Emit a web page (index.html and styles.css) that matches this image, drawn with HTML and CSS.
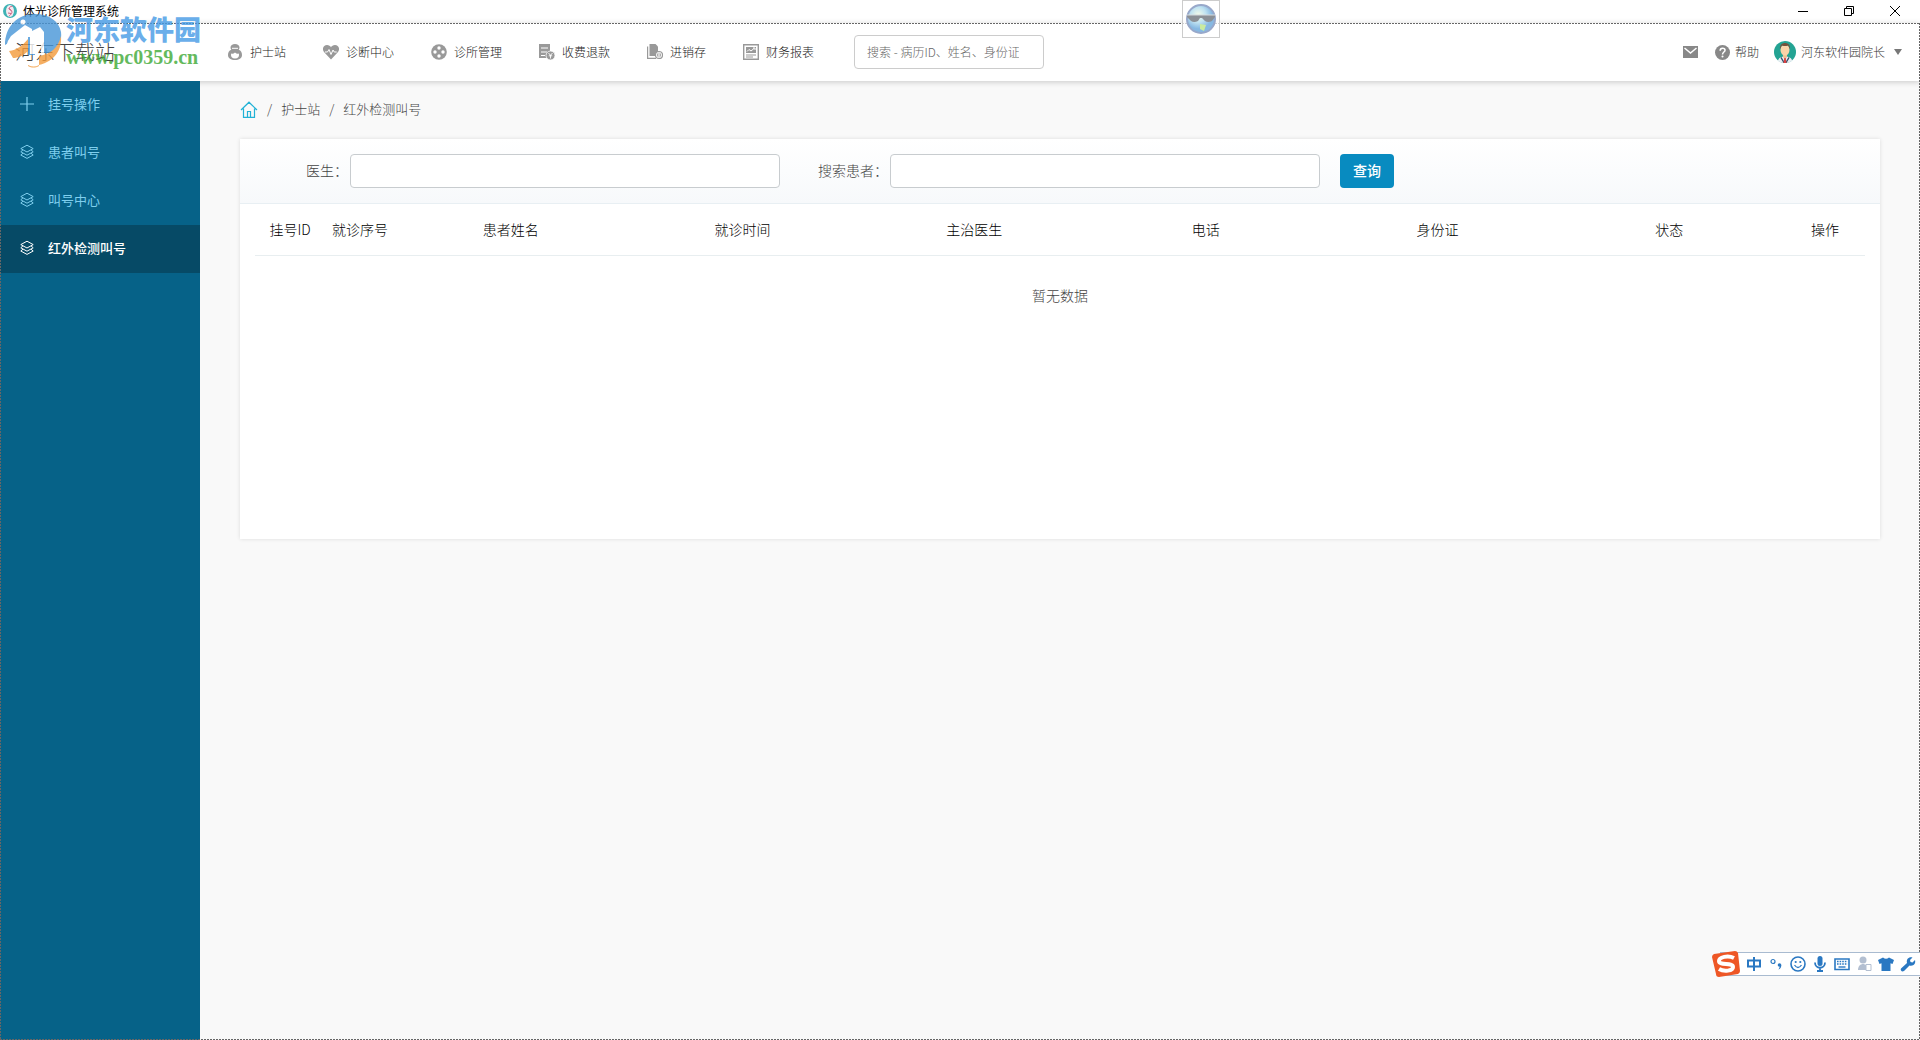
FILE: index.html
```html
<!DOCTYPE html>
<html lang="zh-CN">
<head>
<meta charset="utf-8">
<title>体光诊所管理系统</title>
<link rel="stylesheet" href="styles.css">
</head>
<body>
<svg class="defs" aria-hidden="true">
  <symbol id="layers" viewBox="0 0 16 16">
    <path d="M8 1.200 14.200 4.600 8 8 1.800 4.600zM4 5.800 1.800 7.800 8 11.200 14.200 7.800 12 5.800M4 9.200 1.800 11 8 14.400 14.200 11 12 9.200" fill="none" stroke="currentColor" stroke-linejoin="round"/>
  </symbol>
</svg>

<div class="titlebar">
  <svg class="app-icon" viewBox="0 0 16 16" aria-hidden="true">
    <circle cx="8" cy="8" r="7" fill="#3fb3b5"/>
    <ellipse cx="8" cy="8" rx="4" ry="6" fill="#f4e9ef"/>
    <path d="M10.500 3.500C7 3 6.500 6 9 7.500S8.500 12 7 13M6.500 5.500l3 2M6 10l3 .5" fill="none" stroke="#c2416b" stroke-width=".8"/>
  </svg>
  <span class="app-title">体光诊所管理系统</span>
  <div class="window-controls">
    <button type="button" aria-label="最小化"><svg viewBox="0 0 12 12"><path d="M1 6.500h10"/></svg></button>
    <button type="button" aria-label="还原"><svg viewBox="0 0 12 12"><path d="M1.500 3.500h7v7h-7zM3.500 3V1.500h7v7H9"/></svg></button>
    <button type="button" aria-label="关闭"><svg viewBox="0 0 12 12"><path d="M1 1l10 10M11 1 1 11"/></svg></button>
  </div>
</div>

<div class="client">
  <header class="header">
    <div class="brand">河东下载站</div>
    <nav class="main-nav">
      <a href="#"><svg viewBox="0 0 16 16"><path d="M8 0C5.500 0 3.500 1.500 3.500 3.500c0 1 .3 1.700.8 2.200C2 6.500 1 8.500 1 11c0 3.500 3 5 7 5s7-1.500 7-5c0-2.500-1-4.500-3.300-5.300.5-.5.8-1.200.8-2.200C12.500 1.500 10.500 0 8 0z" fill="#999"/><path d="M5 4.300h6" stroke="#fff"/><path d="M4 9.500q2 1 4-1 2 2 4 1 .5 5-4 5t-4-5z" fill="#fff"/></svg>护士站</a>
      <a href="#"><svg viewBox="0 0 16 16"><path d="M8 15.500 1.200 8.300C-1.500 5 .5 1 4 1c2 0 3.200 1 4 2.200C8.800 2 10 1 12 1c3.500 0 5.500 4 2.800 7.300z" fill="#999"/><path d="M2 8h2.500l1.500-2.500 2 5 2-4.500 1.200 2h2.500" fill="none" stroke="#fff"/></svg>诊断中心</a>
      <a href="#"><svg viewBox="0 0 16 16"><circle cx="8" cy="8" r="7.800" fill="#999"/><g fill="#fff"><circle cx="8" cy="4" r="1.700"/><circle cx="8" cy="12" r="1.700"/><circle cx="4" cy="8" r="1.700"/><circle cx="12" cy="8" r="1.700"/></g></svg>诊所管理</a>
      <a href="#"><svg viewBox="0 0 16 16"><path d="M0 0h11v14H0z" fill="#999"/><path d="M2 4h7M2 8h6M2 11.500h4" stroke="#fff" stroke-width="1.200"/><circle cx="11.500" cy="11.500" r="4.500" fill="#999" stroke="#fff" stroke-width=".8"/><path d="M9.500 9l2 2.300 2-2.300M11.500 11v3.500M9.800 11.800h3.400" fill="none" stroke="#fff" stroke-width=".9"/></svg>收费退款</a>
      <a href="#"><svg viewBox="0 0 16 16"><path d="M2.500 0h6l2.500 2.500V12H2.500z" fill="#999"/><path d="M.6 2.500v11.900H9" fill="none" stroke="#999" stroke-width="1.200"/><circle cx="12" cy="11" r="3.500" fill="#fff" stroke="#999" stroke-width="1.200"/><path d="M12 8.500v5M10.500 9.500v3M13.500 9.500v3" stroke="#999" stroke-width=".8"/></svg>进销存</a>
      <a href="#"><svg viewBox="0 0 16 16"><path d="M.7.700h14.600v14.600H.7z" fill="none" stroke="#999" stroke-width="1.400"/><path d="M3 3h10v6H3z" fill="#999"/><path d="M4 7.500l2-2 2 1.500 3-2.500M10 4h2v2" fill="none" stroke="#fff"/><path d="M3 11h10M3 13h7" stroke="#999"/></svg>财务报表</a>
    </nav>
    <input class="global-search" type="search" aria-label="搜索" placeholder="搜索 - 病历ID、姓名、身份证">
    <div class="user-tools">
      <a class="mail" href="#" aria-label="消息"><svg viewBox="0 0 15 12"><path d="M0 0h15v12H0z" fill="#888"/><path d="M1.500 2 7.500 7l6-5" fill="none" stroke="#fff" stroke-width="1.500"/></svg></a>
      <a class="help" href="#"><svg viewBox="0 0 16 16"><circle cx="8" cy="8" r="8" fill="#888"/><path d="M5.500 6c0-3.500 5.200-3.200 5.200-.3C10.700 7.500 8 7.600 8 10" fill="none" stroke="#fff" stroke-width="1.600"/><circle cx="8" cy="12.300" r="1.100" fill="#fff"/></svg>帮助</a>
      <button class="account" type="button">
        <svg class="avatar" viewBox="0 0 22 22"><circle cx="11" cy="11" r="11" fill="#23a393"/><path d="M4 20c0-3 3-4.500 7-4.500s7 1.500 7 4.500c-4 2.700-10 2.700-14 0z" fill="#e9eef3"/><path d="M9 12h4v4l-2 3-2-3z" fill="#eebf93"/><path d="M7.500 16 11 22l3.500-6 1 1-3 5h-3l-3-5z" fill="#35506b"/><path d="M10.300 17h1.400l.8 5h-3z" fill="#d94343"/><ellipse cx="11" cy="9" rx="4.500" ry="5.500" fill="#fbd3a8"/><path d="M6 8C5 0 17 0 16 8c-1-1-1-3-2-3.500-2 .7-4 .7-6 0C7 5 7 7 6 8z" fill="#76513a"/></svg>
        <span>河东软件园院长</span>
        <svg class="caret" viewBox="0 0 8 6"><path d="M0 0h8L4 6z" fill="#777"/></svg>
      </button>
    </div>
  </header>

  <div class="body">
    <aside class="sidebar">
      <a href="#"><svg viewBox="0 0 16 16"><path d="M8 1v14M1 8h14" stroke="currentColor" fill="none" stroke-width="1.200"/></svg>挂号操作</a>
      <a href="#"><svg><use href="#layers"/></svg>患者叫号</a>
      <a href="#"><svg><use href="#layers"/></svg>叫号中心</a>
      <a class="active" href="#"><svg><use href="#layers"/></svg>红外检测叫号</a>
    </aside>

    <main class="content">
      <nav class="breadcrumb" aria-label="位置">
        <a href="#" aria-label="首页"><svg viewBox="0 0 18 17"><path d="M1 9 9 1.200 17 9M3.500 7.500v8.800h11V7.500M7.500 16v-5.500h3V16" fill="none" stroke="#22b2d6" stroke-width="1.200"/></svg></a>
        <span>/</span><a href="#">护士站</a><span>/</span><span>红外检测叫号</span>
      </nav>
      <section class="card">
        <form class="filters">
          <label for="doctor">医生<span class="colon">：</span></label>
          <input id="doctor" type="text">
          <label for="patient">搜索患者<span class="colon">：</span></label>
          <input id="patient" type="text">
          <button type="button">查询</button>
        </form>
        <div class="table-wrap">
          <table>
            <colgroup><col class="col-s"><col class="col-s"><col><col><col><col><col><col><col class="col-m"></colgroup>
            <thead><tr><th>挂号ID</th><th>就诊序号</th><th>患者姓名</th><th>就诊时间</th><th>主治医生</th><th>电话</th><th>身份证</th><th>状态</th><th>操作</th></tr></thead>
            <tbody><tr><td colspan="9">暂无数据</td></tr></tbody>
          </table>
        </div>
      </section>
    </main>
  </div>
</div>

<div class="watermark">
  <svg viewBox="0 0 62 56" aria-hidden="true">
    <path d="M1 32C1 14 13 1 31 1c14 0 24 7 26 18 1 8-2 15-9 21h-7l-4 1V21h-6v21h-7V24l-6-2z" fill="#4796d8"/>
    <path d="M7 23 21 12l7 4v2l8-4 4 5v22h-3V22h-5v19h-6V24h-6L2 34q1-6 5-11z" fill="#fff"/>
    <circle cx="19" cy="9" r="2.500" fill="#fff"/>
    <path d="M5 38c8-1 13-5 19-12v27c4 2 7 2 11 0V43c12-2 19-8 22-20 1 14-6 25-22 29q-5 3-11 0V38c-5 5-10 7-15 7z" fill="#f39a3a"/>
  </svg>
  <div class="watermark-text"><span class="wm-name">河东软件园</span><span class="wm-url">www.pc0359.cn</span></div>
</div>

<div class="globe">
  <svg viewBox="0 0 32 32" aria-hidden="true">
    <defs><radialGradient id="g" cx=".4" cy=".35"><stop offset="0" stop-color="#f3fbe9"/><stop offset=".55" stop-color="#bfe2f1"/><stop offset="1" stop-color="#86b8e2"/></radialGradient></defs>
    <circle cx="16" cy="16" r="14" fill="url(#g)" stroke="#98a8ca" stroke-width="2"/>
    <path d="M15 21l6 1-2 6-4-2z" fill="#c9eba0"/>
    <path d="M2 12h28v2l-3 4q-4 2-7 0l-3-3h-2l-2 3q-4 2-7 0l-4-4z" fill="#8b9096"/>
    <path d="M2 12h28" stroke="#d5dadd"/>
  </svg>
</div>

<div class="ime">
  <svg class="ime-logo" viewBox="0 0 28 28" aria-hidden="true"><path d="M2 4 23 1q2 0 3 2l2 18q0 2-2 3L7 27q-3 0-3-3L0 7q0-2 2-3z" fill="#ee5726"/><path d="M22 8C16 5 7 7 7 11c0 5 14 1 14 6 0 4-9 5-14 2" fill="none" stroke="#fff" stroke-width="4"/></svg>
  <button type="button" aria-label="中文"><svg viewBox="0 0 16 16"><path d="M2 4.500h12v6H2zM8 1v14" fill="none" stroke="#2a78c2" stroke-width="2"/></svg></button>
  <button type="button" aria-label="标点"><svg viewBox="0 0 16 16"><circle cx="5" cy="5.500" r="2" fill="none" stroke="#2a78c2" stroke-width="1.200"/><circle cx="11.500" cy="9" r="1.800"/><path d="M13.300 9c0 2.500-1 4-3 4.500 1-1 1.300-2 1.200-3z"/></svg></button>
  <button type="button" aria-label="表情"><svg viewBox="0 0 16 16"><circle cx="8" cy="8" r="7" fill="none" stroke="#2a78c2" stroke-width="1.600"/><circle cx="5.700" cy="6" r="1.100"/><circle cx="10.300" cy="6" r="1.100"/><path d="M4.500 9q3.500 5 7 0" fill="none" stroke="#2a78c2" stroke-width="1.300"/></svg></button>
  <button type="button" aria-label="语音"><svg viewBox="0 0 16 16"><rect x="5.500" y="0" width="5" height="10" rx="2.500"/><path d="M3 6.500c0 7 10 7 10 0M8 12v3M5 15h6" fill="none" stroke="#2a78c2" stroke-width="1.800"/></svg></button>
  <button type="button" aria-label="键盘"><svg viewBox="0 0 16 16"><path d="M1 3h14v10.500H1z" fill="#fff" stroke="#2a78c2" stroke-width="1.600"/><path d="M3 5.500h10.500M3 8h10.500" stroke="#2a78c2" stroke-width="1.500" stroke-dasharray="1.600 1"/><path d="M4.500 11h7" stroke="#2a78c2" stroke-width="1.400"/></svg></button>
  <button type="button" aria-label="账户"><svg viewBox="0 0 16 16"><g fill="#b3bfd1"><circle cx="7" cy="4" r="3.500"/><path d="M2 14c0-8 10-8 10 0z"/></g><path d="M10 8.500h5v6h-5z" fill="#fff" stroke="#b3bfd1"/></svg></button>
  <button type="button" aria-label="皮肤"><svg viewBox="0 0 16 16"><path d="M5 1.500q3 2.500 6 0l5 2.500-1.500 4-2-.8V15h-9V7.200l-2 .8L0 4z"/></svg></button>
  <button type="button" aria-label="设置"><svg viewBox="0 0 16 16"><path d="M1 12.500 7 7C6 3 9 .5 12.500 1.500L10 4l.5 2 2 .5L15 4c1 3.500-1.500 6.500-5.500 5.500L4 15q-2 1-3-.5-.6-1 0-2z"/></svg></button>
</div>
</body>
</html>
```

FILE: styles.css
```css
* { box-sizing: border-box; }

body {
  margin: 0;
  min-height: 100vh;
  display: flex;
  flex-direction: column;
  background: #f9f9f9;
  color: #444;
  font: 300 13px/20px "Noto Sans CJK SC", sans-serif;
}

a { color: inherit; text-decoration: none; }
button, input { font: inherit; color: inherit; }
svg { display: block; flex: none; }
.defs { position: absolute; width: 0; height: 0; }

/* Window title bar */
.titlebar {
  display: flex;
  align-items: center;
  height: 23px;
  padding: 0 2px 2px;
  background: #fff;
  color: #000;
  font-size: 12px;
  font-weight: 400;
}
.app-icon { width: 16px; height: 16px; margin-right: 5px; }
.window-controls { display: flex; margin-left: auto; }
.window-controls button {
  display: grid;
  place-items: center;
  width: 46px;
  height: 20px;
  padding: 0;
  border: 0;
  background: none;
}
.window-controls svg { width: 12px; height: 12px; fill: none; stroke: #000; }

/* Client area, outlined with a dashed frame */
.client {
  position: relative;
  flex: 1;
  display: flex;
  flex-direction: column;
}
.client::after {
  content: "";
  position: absolute;
  inset: 0;
  z-index: 3;
  pointer-events: none;
  background:
    repeating-linear-gradient(90deg, #666 0 2px, transparent 2px 3px) top / 100% 1px no-repeat,
    repeating-linear-gradient(90deg, #666 0 2px, transparent 2px 3px) bottom / 100% 1px no-repeat,
    repeating-linear-gradient(#666 0 2px, transparent 2px 3px) left / 1px 100% no-repeat,
    repeating-linear-gradient(#666 0 2px, transparent 2px 3px) right / 1px 100% no-repeat;
}

/* Header */
.header {
  position: relative;
  z-index: 1;
  display: flex;
  align-items: center;
  height: 58px;
  background: #fff;
  box-shadow: 0 1px 6px rgba(0, 0, 0, .2);
  font-size: 12px;
}
.brand { width: 227px; padding-left: 15px; font-size: 20px; color: #444; }
.main-nav { display: flex; gap: 37px; color: #222; white-space: nowrap; }
.main-nav a { display: flex; align-items: center; gap: 7px; }
.main-nav svg { width: 16px; height: 16px; }
.global-search {
  width: 190px;
  height: 34px;
  margin-left: 40px;
  padding: 0 12px 2px;
  border: 1px solid #ccc;
  border-radius: 4px;
  background: #fff;
}
.global-search::placeholder { color: #666; opacity: 1; }
.user-tools {
  display: flex;
  align-items: center;
  margin-left: auto;
  padding-right: 18px;
  color: #333;
  white-space: nowrap;
}
.mail svg { width: 15px; height: 12px; }
.help { display: flex; align-items: center; gap: 5px; margin: 0 15px 0 17px; }
.help svg { width: 15px; height: 15px; }
.account {
  display: flex;
  align-items: center;
  gap: 5px;
  padding: 0;
  border: 0;
  background: none;
}
.avatar { width: 22px; height: 22px; }
.caret { width: 8px; height: 6px; margin-left: 4px; }

/* Sidebar */
.body { flex: 1; display: flex; }
.sidebar {
  position: relative;
  z-index: 2;
  flex: none;
  width: 200px;
  background: #066288;
  color: #7fcfee;
  font-weight: 400;
}
.sidebar a {
  display: flex;
  align-items: center;
  gap: 13px;
  height: 48px;
  padding: 0 0 2px 19px;
}
.sidebar svg { width: 16px; height: 16px; }
.sidebar .active { background: #064a66; color: #fff; font-weight: 500; }

/* Content */
.content { flex: 1; min-width: 0; padding: 15px 40px 40px; }
.breadcrumb { display: flex; align-items: center; gap: 9px; height: 26px; margin-bottom: 17px; }
.breadcrumb svg { width: 18px; height: 17px; }
.card { min-height: 400px; background: #fff; box-shadow: 0 0 4px rgba(0, 0, 0, .12); }
.filters {
  display: grid;
  grid-template-columns: 110px minmax(0, 430px) 110px minmax(0, 430px) 74px;
  align-items: center;
  height: 65px;
  border-bottom: 1px solid #e8eff3;
  background: linear-gradient(#fff, #f7f9fb);
  font-size: 14px;
}
.filters label { padding: 0 2px 2px 0; text-align: right; }
.colon { font-family: "Noto Sans CJK TC", sans-serif; }
.filters input {
  height: 34px;
  padding: 0 12px;
  border: 1px solid #c8cccf;
  border-radius: 4px;
  background: #fff;
}
.filters button {
  height: 34px;
  margin-left: 20px;
  padding: 0 0 2px;
  border: 0;
  border-radius: 4px;
  background: #088bc0;
  color: #fff;
  font-weight: 500;
}
.table-wrap { padding: 0 15px; font-size: 14px; }
table { width: 100%; table-layout: fixed; border-collapse: collapse; text-align: center; }
.col-s { width: 70px; }
.col-m { width: 80px; }
th { height: 51px; padding: 0 0 1px; border-bottom: 1px solid #e8eef0; color: #000; font-weight: 300; }
td { height: 80px; padding: 0; }

/* Site watermark over the top left corner */
.watermark {
  position: absolute;
  top: 13px;
  left: 4px;
  z-index: 4;
  display: flex;
  pointer-events: none;
  opacity: .8;
}
.watermark svg { width: 62px; height: 56px; }
.watermark-text { display: flex; flex-direction: column; white-space: nowrap; }
.wm-name { font-weight: 900; font-size: 27px; line-height: 32px; color: #459be6; }
.wm-url { font: bold 20px/24px "Liberation Serif", serif; color: #3da935; }

/* Floating globe */
.globe {
  position: absolute;
  top: 0;
  left: 1182px;
  z-index: 4;
  padding: 2px;
  border: 1px solid #ccc;
  background: rgba(255, 255, 255, .7);
}
.globe svg { width: 32px; height: 32px; }

/* Input method bar */
.ime {
  position: fixed;
  right: 0;
  bottom: 64px;
  z-index: 4;
  display: flex;
  align-items: center;
  gap: 6px;
  height: 24px;
  padding-right: 4px;
  border: 1px solid #a9bbd0;
  border-width: 1px 0;
  background: #fff;
}
.ime button { padding: 0; border: 0; background: none; }
.ime button svg { width: 16px; height: 16px; fill: #2a78c2; }
.ime-logo { width: 28px; height: 28px; margin-left: -8px; }
```
